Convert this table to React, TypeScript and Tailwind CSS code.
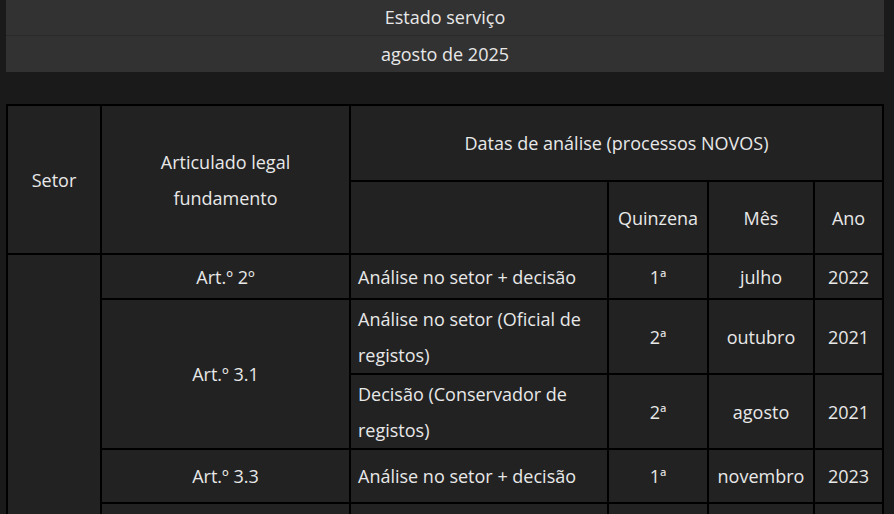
const rows = [
  { art: 'Art.º 2º', items: [{ desc: 'Análise no setor + decisão', q: '1ª', m: 'julho', a: '2022' }], h: 'h-[45px]' },
  {
    art: 'Art.º 3.1',
    items: [
      { desc: 'Análise no setor (Oficial de registos)', q: '2ª', m: 'outubro', a: '2021' },
      { desc: 'Decisão (Conservador de registos)', q: '2ª', m: 'agosto', a: '2021' },
    ],
    h: 'h-[75px]',
  },
  { art: 'Art.º 3.3', items: [{ desc: 'Análise no setor + decisão', q: '1ª', m: 'novembro', a: '2023' }], h: 'h-[54px]' },
  // a linha seguinte fica cortada no fundo do ecrã
  { art: '', items: [{ desc: '', q: '', m: '', a: '' }], h: 'h-[40px]' },
]

const cell = 'border-2 border-black bg-[#222222] text-center align-middle px-2 leading-[36px]'

export default function App() {
  return (
    <div
      className="min-h-screen bg-[#1a1a1a] text-[#e8e8e8] text-[18px] pl-[6px] pr-[10px]"
      style={{ fontFamily: '"Open Sans", "Noto Sans", sans-serif' }}
    >
      {/* cabeçalho */}
      <div className="bg-[#323232]">
        <div className="h-[36px] flex items-center justify-center border-b border-[#2a2a2a]">Estado serviço</div>
        <div className="h-[36px] flex items-center justify-center">agosto de 2025</div>
      </div>

      <div className="pt-[32px]">
        <table className="w-full border-collapse table-fixed">
          <colgroup>
            <col className="w-[94px]" />
            <col className="w-[249px]" />
            <col className="w-[258px]" />
            <col className="w-[100px]" />
            <col className="w-[106px]" />
            <col />
          </colgroup>
          <thead>
            <tr className="h-[76px]">
              <th rowSpan={2} className={`${cell} font-normal`}>Setor</th>
              <th rowSpan={2} className={`${cell} font-normal`}>
                Articulado legal
                <br />
                fundamento
              </th>
              <th colSpan={4} className={`${cell} font-normal`}>Datas de análise (processos NOVOS)</th>
            </tr>
            <tr className="h-[73px]">
              <th className={`${cell} font-normal`}></th>
              <th className={`${cell} font-normal`}>Quinzena</th>
              <th className={`${cell} font-normal`}>Mês</th>
              <th className={`${cell} font-normal`}>Ano</th>
            </tr>
          </thead>
          <tbody>
            {rows.map((r, ri) =>
              r.items.map((it, ii) => (
                <tr key={`${ri}-${ii}`} className={r.h}>
                  {ri === 0 && ii === 0 && <td rowSpan={5} className={cell}></td>}
                  {ii === 0 && (
                    <td rowSpan={r.items.length} className={cell}>
                      {r.art}
                    </td>
                  )}
                  <td className={`${cell} text-left pl-[7px]`}>{it.desc}</td>
                  <td className={cell}>{it.q}</td>
                  <td className={cell}>{it.m}</td>
                  <td className={cell}>{it.a}</td>
                </tr>
              ))
            )}
          </tbody>
        </table>
      </div>
    </div>
  )
}
